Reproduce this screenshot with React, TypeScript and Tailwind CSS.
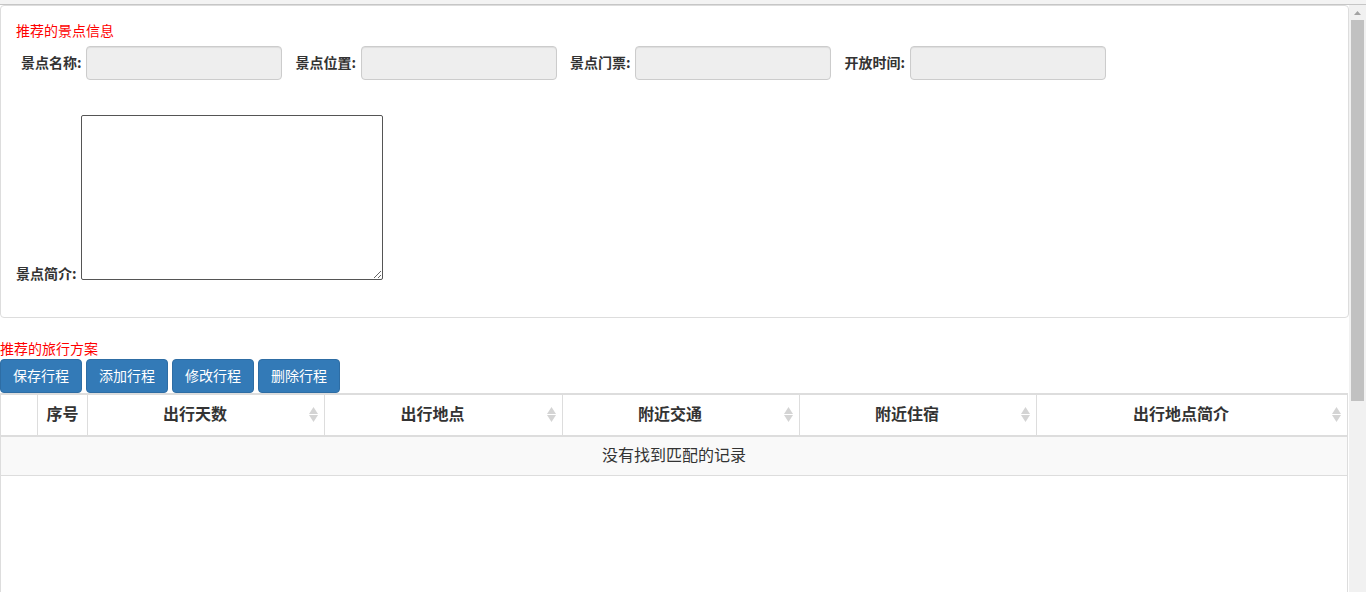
const fields = ['景点名称:', '景点位置:', '景点门票:', '开放时间:'];
const buttons = ['保存行程', '添加行程', '修改行程', '删除行程'];

const columns = [
  { title: '', sortable: false },
  { title: '序号', sortable: false },
  { title: '出行天数', sortable: true },
  { title: '出行地点', sortable: true },
  { title: '附近交通', sortable: true },
  { title: '附近住宿', sortable: true },
  { title: '出行地点简介', sortable: true },
];

function SortIcon() {
  return (
    <svg width="9" height="15" viewBox="0 0 9 15" className="absolute right-[6px] top-[12px]">
      <path d="M4.5 0 L9 7 L0 7 Z" fill="#d4d4d4" />
      <path d="M0 8 L9 8 L4.5 15 Z" fill="#d4d4d4" />
    </svg>
  );
}

function Scrollbar() {
  return (
    <div className="w-[17px] shrink-0 bg-[#f1f1f1] flex flex-col items-center">
      <div className="h-[15px] w-full flex items-center justify-center">
        <svg width="7" height="4" viewBox="0 0 7 4">
          <path d="M3.5 0 L7 4 L0 4 Z" fill="#a3a3a3" />
        </svg>
      </div>
      <div className="w-[13px] h-[381px] bg-[#c1c1c1]" />
    </div>
  );
}

export default function App() {
  return (
    <div className="h-[592px] overflow-hidden bg-white text-[#333] font-['Noto_Sans_CJK_SC','Liberation_Sans',sans-serif]">
      <div className="h-[5px] bg-[#f3f3f3] border-b border-[#c6c6c6]" />
      <div className="flex h-[587px]">
        <div className="flex-1 min-w-0 flex flex-col">
          {/* 景点信息 */}
          <div className="border border-[#ddd] rounded-[4px] pt-[15px] pb-[37px] px-[15px]">
            <div className="h-5 leading-[18px] text-[14px] text-[#f00]">推荐的景点信息</div>
            <div className="mt-[5px] flex items-center gap-[13.5px] pl-[5px]">
              {fields.map((f) => (
                <div key={f} className="flex items-center">
                  <label className="w-[60px] text-[14px] font-bold leading-5 pb-[3px] whitespace-nowrap">{f}</label>
                  <input
                    disabled
                    className="ml-[5px] w-[196px] h-[34px] bg-[#eee] border border-[#ccc] rounded-[4px] shadow-[inset_0_1px_1px_rgba(0,0,0,0.075)]"
                  />
                </div>
              ))}
            </div>
            <div className="mt-[35px] flex items-end">
              <label className="text-[14px] font-bold leading-[14px] whitespace-nowrap">景点简介:</label>
              <textarea className="ml-[4px] w-[302px] h-[165px] border border-[#555] rounded-[2px] outline-none" />
            </div>
          </div>

          {/* 旅行方案 */}
          <div className="mt-[21px] h-5 leading-[18px] text-[14px] text-[#f00]">推荐的旅行方案</div>
          <div className="flex gap-[4px]">
            {buttons.map((b) => (
              <button
                key={b}
                className="w-[82px] h-[34px] pb-[2px] bg-[#337ab7] border border-[#2e6da4] rounded-[4px] text-white text-[14px]"
              >
                {b}
              </button>
            ))}
          </div>

          <div className="flex-1 border-x border-[#ddd] mr-[1px] flex flex-col">
            <div className="grid grid-cols-[36px_50px_237px_238px_237px_237px_1fr] border-y-2 border-[#ddd] h-[44px]">
              {columns.map((c, i) => (
                <div
                  key={i}
                  className={`relative flex items-center h-full pb-[4px] ${i > 0 ? 'border-l border-[#ddd]' : ''} ${c.sortable ? 'pl-2 pr-[30px]' : 'px-2'}`}
                >
                  <span className="w-full text-center text-[16px] font-bold whitespace-nowrap">{c.title}</span>
                  {c.sortable && <SortIcon />}
                </div>
              ))}
            </div>
            <div className="h-[39px] pb-[4px] bg-[#f9f9f9] border-b border-[#ddd] flex items-center justify-center text-[16px]">
              没有找到匹配的记录
            </div>
          </div>
        </div>
        <Scrollbar />
      </div>
    </div>
  );
}
